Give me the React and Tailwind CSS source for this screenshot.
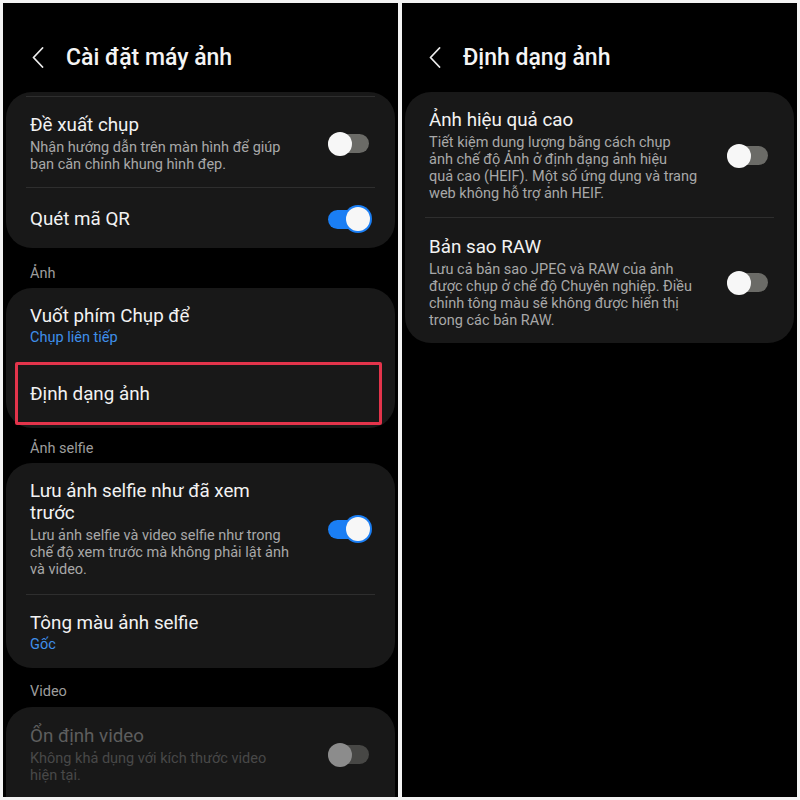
import React from "react";

function Toggle({ on, disabled }) {
  const track = disabled ? "bg-[#474745]" : on ? "bg-[#1a7ef4]" : "bg-[#6b6b67]";
  const knob = disabled ? "bg-[#8c8c8c]" : "bg-[#f7f7f7]";
  return (
    <div className="relative w-[41px] h-[24px] shrink-0 flex items-center">
      <div className={`w-[41px] h-[19px] rounded-full ${track}`} />
      <div
        className={`absolute top-0 w-[24px] h-[24px] rounded-full ${knob} ${
          on ? "right-[-1px] ring-2 ring-[#1a7ef4]" : "left-0"
        }`}
      />
    </div>
  );
}

function Lines({ lines, className }) {
  return (
    <div className={className}>
      {lines.map((l, i) => (
        <div key={i}>{l}</div>
      ))}
    </div>
  );
}

function Item({ title, sub, link, toggle, on, disabled, pt = "pt-[17px]", pb = "pb-[16px]", children }) {
  return (
    <div className={`relative flex items-center pl-[24px] pr-[26px] ${pt} ${pb}`}>
      <div className="flex-1 min-w-0">
        <Lines
          lines={title}
          className={`text-[18.8px] leading-[22px] ${disabled ? "text-[#5e5e5e]" : "text-[#f2f2f2]"}`}
        />
        {sub && (
          <Lines
            lines={sub}
            className={`mt-[3px] text-[14.5px] leading-[17px] ${disabled ? "text-[#484848]" : "text-[#a8a8a8]"}`}
          />
        )}
        {link && <div className="mt-[1px] text-[14.5px] leading-[20px] text-[#3f8fea]">{link}</div>}
      </div>
      {toggle && <Toggle on={on} disabled={disabled} />}
      {children}
    </div>
  );
}

function Divider() {
  return <div className="mx-[20px] h-px bg-[#2e2e2e]" />;
}

function Section({ label, pt, pb }) {
  return <div className={`pl-[27px] ${pt} ${pb} text-[14.5px] leading-[16px] text-[#9d9d9d]`}>{label}</div>;
}

function Card({ children, className = "" }) {
  return <div className={`mx-[3px] rounded-[26px] bg-[#181818] ${className}`}>{children}</div>;
}

function Header({ title, pl = "pl-[29px]" }) {
  return (
    <div className={`h-[89px] flex items-center pt-[20px] ${pl}`}>
      <svg width="12" height="21" viewBox="0 0 12 21" fill="none" className="shrink-0">
        <path d="M10.5 1 L1.5 10.5 L10.5 20" stroke="#ececec" strokeWidth="1.8" strokeLinecap="round" strokeLinejoin="round" />
      </svg>
      <div className="ml-[22px] text-[23px] leading-[30px] text-[#f4f4f4] font-medium">{title}</div>
    </div>
  );
}

export default function App() {
  return (
    <div
      className="w-[800px] h-[800px] bg-[#f3f3f3] p-[3px] flex gap-[4px] overflow-hidden"
      style={{ fontFamily: "Roboto, 'Noto Sans', sans-serif" }}
    >
      {/* left screen */}
      <div className="flex-1 bg-black overflow-hidden">
        <Header title="Cài đặt máy ảnh" />
        <Card>
          <div className="pt-[4px]">
            <Divider />
          </div>
          <Item
            title={["Đề xuất chụp"]}
            sub={["Nhận hướng dẫn trên màn hình để giúp", "bạn căn chỉnh khung hình đẹp."]}
            toggle
            pb="pb-[14px]"
          />
          <Divider />
          <Item title={["Quét mã QR"]} toggle pt="pt-[19px]" pb="pb-[17px]" on />
        </Card>
        <Section label="Ảnh" pt="pt-[18px]" pb="pb-[6px]" />
        <Card>
          <Item title={["Vuốt phím Chụp để"]} link="Chụp liên tiếp" pb="pb-[14px]" />
          <Item title={["Định dạng ảnh"]} pt="pt-[21px]" pb="pb-[23px]">
            <div className="absolute left-[9px] right-[13px] top-0 bottom-[3px] border-[3px] border-[#e3344b] rounded-[2px]" />
          </Item>
        </Card>
        <Section label="Ảnh selfie" pt="pt-[13px]" pb="pb-[6px]" />
        <Card>
          <Item
            title={["Lưu ảnh selfie như đã xem", "trước"]}
            sub={["Lưu ảnh selfie và video selfie như trong", "chế độ xem trước mà không phải lật ảnh", "và video."]}
            toggle
            on
          />
          <Divider />
          <Item title={["Tông màu ảnh selfie"]} link="Gốc" pb="pb-[13px]" />
        </Card>
        <Section label="Video" pt="pt-[16px]" pb="pb-[7px]" />
        <Card className="pb-[30px]">
          <Item
            title={["Ổn định video"]}
            sub={["Không khả dụng với kích thước video", "hiện tại."]}
            toggle
            disabled
            pt="pt-[18px]"
          />
        </Card>
      </div>

      {/* right screen */}
      <div className="flex-1 bg-black overflow-hidden">
        <Header title="Định dạng ảnh" pl="pl-[27px]" />
        <Card>
          <Item
            title={["Ảnh hiệu quả cao"]}
            sub={[
              "Tiết kiệm dung lượng bằng cách chụp",
              "ảnh chế độ Ảnh ở định dạng ảnh hiệu",
              "quả cao (HEIF). Một số ứng dụng và trang",
              "web không hỗ trợ ảnh HEIF.",
            ]}
            toggle
            pb="pb-[15px]"
          />
          <Divider />
          <Item
            title={["Bản sao RAW"]}
            sub={[
              "Lưu cả bản sao JPEG và RAW của ảnh",
              "được chụp ở chế độ Chuyên nghiệp. Điều",
              "chỉnh tông màu sẽ không được hiển thị",
              "trong các bản RAW.",
            ]}
            toggle
            pt="pt-[18px]"
            pb="pb-[14px]"
          />
        </Card>
      </div>
    </div>
  );
}
